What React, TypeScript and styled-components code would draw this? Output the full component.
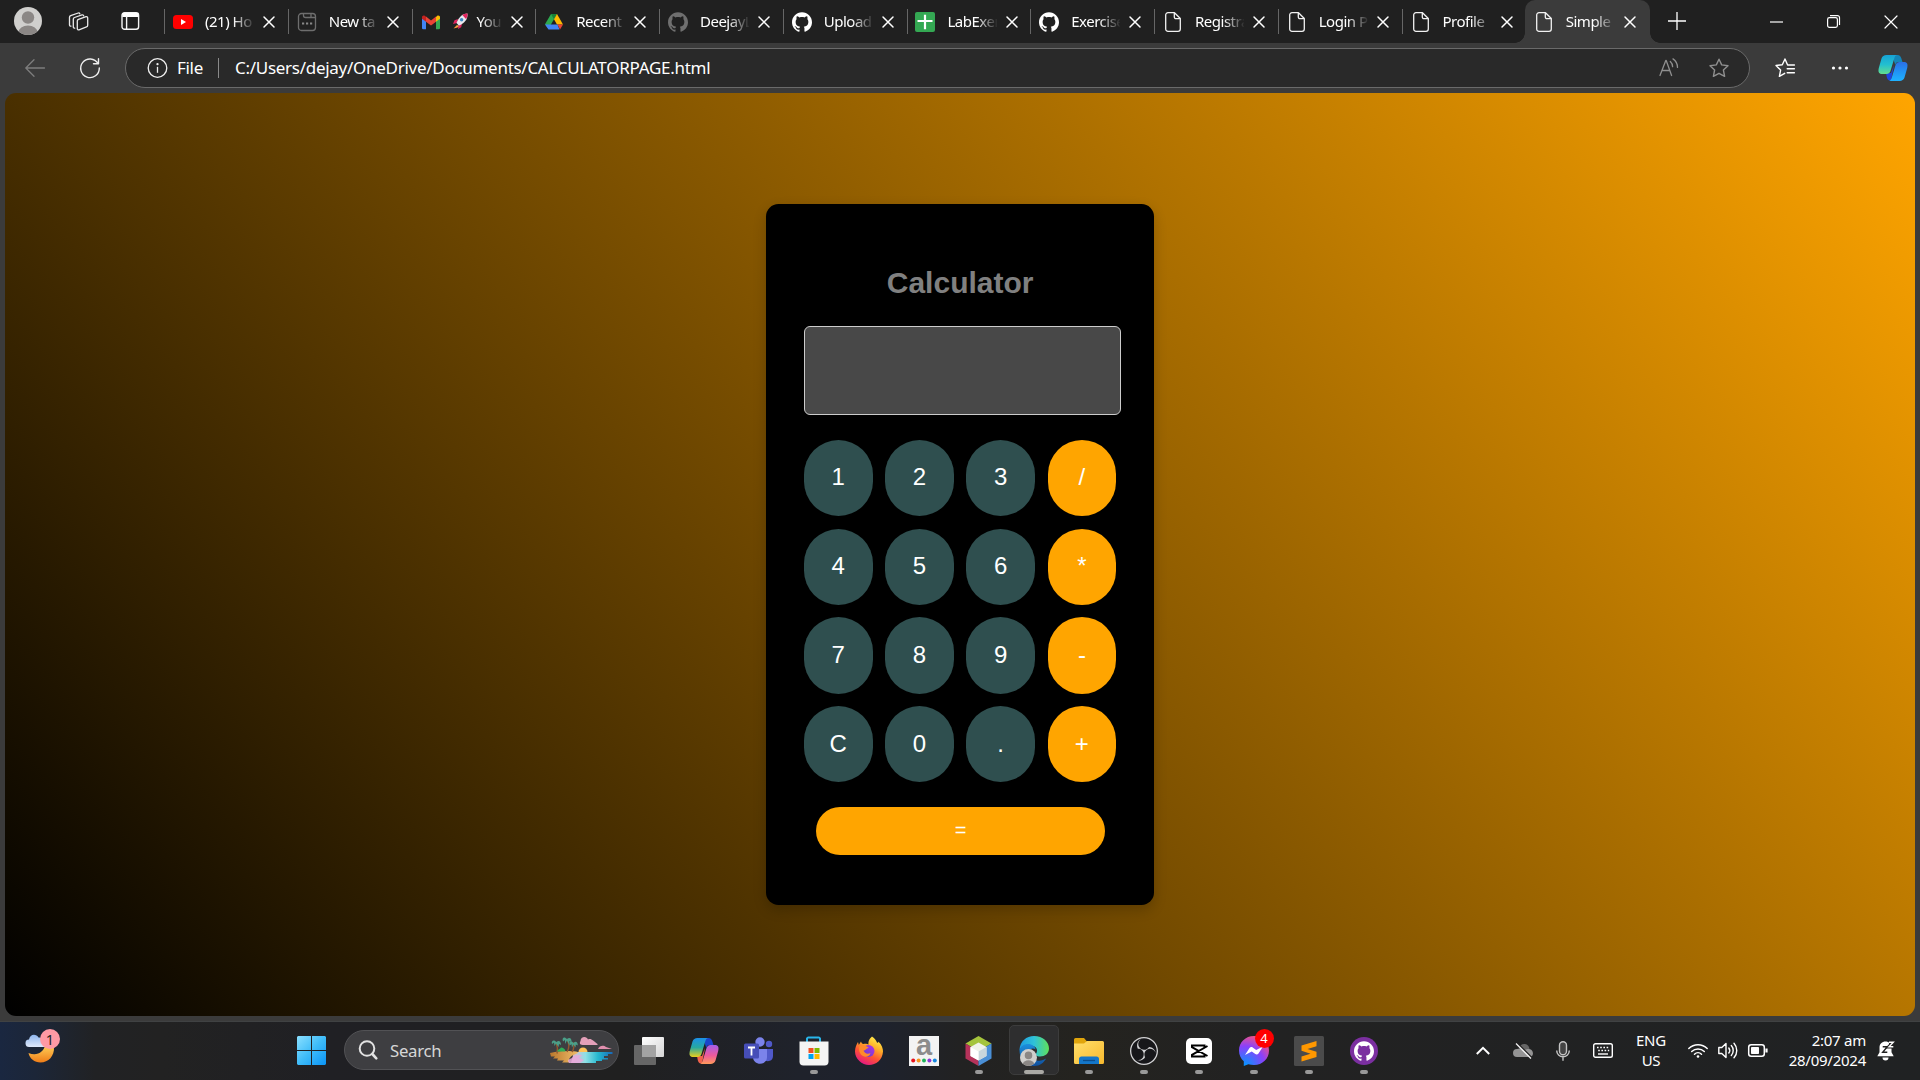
import React from "react";
import styled, { createGlobalStyle, css } from "styled-components";
import { SiGithub, SiObsstudio } from "react-icons/si";

const GlobalStyle = createGlobalStyle`
  *, *::before, *::after { box-sizing: border-box; }
  html, body { margin: 0; padding: 0; background: #202020; overflow: hidden; }
  svg { display: block; flex: none; overflow: visible; }
`;

const ui = `"Noto Sans", "Open Sans", sans-serif`;
const arial = `"Liberation Sans", Arial, sans-serif`;

const Screen = styled.div`
  width: 1920px;
  height: 1080px;
  display: flex;
  flex-direction: column;
  background: #3b3b3b;
  color: #fff;
  font-family: ${ui};
  overflow: hidden;
`;

/* ---------- tab strip ---------- */

const TabStrip = styled.header`
  height: 43px;
  display: flex;
  background: #202020;
`;

const StripTools = styled.div`
  width: 164px;
  height: 43px;
  padding: 0 0 1px 14px;
  display: flex;
  align-items: center;
`;

const ToolSlot = styled.div<{ $w: number; $gap?: number }>`
  width: ${(p) => p.$w}px;
  height: 28px;
  margin-right: ${(p) => p.$gap || 0}px;
  display: flex;
  align-items: center;
  justify-content: center;
`;

const TabItem = styled.div<{ $active?: boolean; $line: boolean }>`
  position: relative;
  width: 123.75px;
  height: 43px;
  padding-left: 9px;
  display: flex;
  align-items: center;
  ${(p) =>
    p.$line &&
    css`
      &::before {
        content: "";
        position: absolute;
        left: 0;
        top: 9px;
        width: 1px;
        height: 25px;
        background: #666;
      }
    `}
  ${(p) =>
    p.$active &&
    css`
      width: 125px;
      margin-left: -0.5px;
      background: #3b3b3b;
      border-radius: 10px 10px 0 0;
      &::before,
      &::after {
        content: "";
        position: absolute;
        bottom: 0;
        width: 10px;
        height: 10px;
      }
      &::before {
        left: -10px;
        background: radial-gradient(circle at 0 0, transparent 9.5px, #3b3b3b 10px);
      }
      &::after {
        right: -10px;
        background: radial-gradient(circle at 100% 0, transparent 9.5px, #3b3b3b 10px);
      }
    `}
`;

const TabIcon = styled.div`
  width: 20px;
  height: 20px;
  margin: 1px 12px 0 0;
  display: flex;
  align-items: center;
  justify-content: center;
`;

const TabTitle = styled.div`
  width: 49px;
  height: 24px;
  margin: 0 10px 1px 0;
  display: flex;
  align-items: center;
  gap: 9px;
  overflow: hidden;
  white-space: nowrap;
  font-size: 15px;
  letter-spacing: -0.5px;
  line-height: 24px;
  mask-image: linear-gradient(90deg, #000 28px, transparent 50px);
`;

const StripSpacer = styled.div`
  flex: 1;
`;

const NewTab = styled.div`
  width: 54px;
  height: 42px;
  display: flex;
  align-items: center;
  justify-content: center;
`;

const WindowButton = styled.div`
  width: 57.5px;
  height: 43px;
  display: flex;
  align-items: center;
  justify-content: center;
`;

/* ---------- toolbar ---------- */

const Toolbar = styled.div`
  height: 50px;
  padding: 5px 0 5px 15px;
  display: flex;
  align-items: center;
`;

const NavButton = styled.div<{ $w: number }>`
  width: ${(p) => p.$w}px;
  height: 40px;
  flex: none;
  display: flex;
  align-items: center;
  justify-content: center;
`;

const AddressBar = styled.div`
  width: 1625px;
  height: 40px;
  flex: none;
  padding: 0 20px 0 21px;
  display: flex;
  align-items: center;
  background: #292929;
  border: 1px solid #6a6a6a;
  border-radius: 20px;
`;

const Scheme = styled.span`
  width: 51px;
  padding-left: 10px;
  font-size: 17px;
  letter-spacing: -0.3px;
  line-height: 22px;
`;

const SchemeLine = styled.i`
  width: 1px;
  height: 20px;
  margin-right: 16px;
  background: #8a8a8a;
`;

const Url = styled.span`
  flex: 1;
  font-size: 17px;
  letter-spacing: -0.28px;
  line-height: 22px;
  white-space: nowrap;
`;

const BarIcons = styled.div`
  display: flex;
  gap: 30px;
`;

/* ---------- page ---------- */

const Page = styled.main`
  height: 923px;
  margin: 0 5px 5px;
  display: flex;
  align-items: center;
  justify-content: center;
  border-radius: 11px;
  background: linear-gradient(50deg, #000, #ffa500);
  font-family: ${arial};
`;

const Card = styled.section`
  width: 388px;
  height: 701px;
  padding: 62px 37.5px 0 37.75px;
  display: flex;
  flex-direction: column;
  background: #000;
  border-radius: 12.5px;
  box-shadow: 0 5px 12.5px rgba(0, 0, 0, 0.2);
`;

const Title = styled.h2`
  margin: 0;
  height: 60px;
  font-size: 30px;
  line-height: 34px;
  font-weight: 700;
  color: #808080;
  text-align: center;
`;

const Display = styled.div`
  width: 317px;
  height: 89px;
  flex: none;
  background: #484848;
  border: 1px solid #ccc;
  border-radius: 6px;
`;

const Keys = styled.div`
  margin-top: 24.75px;
  display: grid;
  grid-template-columns: repeat(4, 68.75px);
  grid-auto-rows: 76.25px;
  gap: 12.5px;
`;

const Key = styled.button<{ $op?: boolean }>`
  padding: 0 0 1px;
  border: 0;
  border-radius: 62.5px;
  background: ${(p) => (p.$op ? "#ffa500" : "#2f4f4f")};
  color: #fff;
  font-family: ${arial};
  font-size: 24px;
`;

const EqualsKey = styled(Key)`
  width: 289px;
  height: 48px;
  flex: none;
  margin: 25px 0 0 12.25px;
  border-radius: 25px;
  padding-bottom: 2px;
  font-size: 20px;
`;

/* ---------- taskbar ---------- */

const Taskbar = styled.footer`
  height: 59px;
  display: flex;
  align-items: flex-start;
  border-top: 1px solid #404243;
  background: linear-gradient(
    90deg, #1a2740 0, #1c2638 35px, #212224 95px, #222222 160px, #202024 330px,
    #202020 620px, #1f222b 800px, #1e222d 880px, #222222 960px, #24231f 1080px, #222 1250px, #202223 1920px
  );
`;

const Widgets = styled.div`
  width: 284.5px;
  height: 58px;
  padding: 10px 0 0 23px;
`;

const TaskButton = styled.div<{ $focused?: boolean }>`
  position: relative;
  width: 55px;
  height: 58px;
  padding: 0 1px 1px 0;
  display: flex;
  align-items: center;
  justify-content: center;
  ${(p) =>
    p.$focused &&
    css`
      &::before {
        content: "";
        position: absolute;
        left: 2px;
        top: 3px;
        width: 50px;
        height: 50px;
        border: 1px solid #3c3c3c;
        border-radius: 5px;
        background: #2e2e2f;
      }
    `}
  svg {
    position: relative;
  }
`;

const Running = styled.i<{ $wide?: boolean }>`
  position: absolute;
  left: ${(p) => (p.$wide ? 17 : 23)}px;
  bottom: 6px;
  width: ${(p) => (p.$wide ? 20 : 8)}px;
  height: 4px;
  border-radius: 2px;
  background: ${(p) => (p.$wide ? "#aaa9a5" : "#999")};
`;

const Badge = styled.b`
  position: absolute;
  left: 28px;
  top: 7px;
  width: 19px;
  height: 19px;
  border-radius: 50%;
  background: #f00;
  font-size: 13px;
  font-weight: 400;
  line-height: 19px;
  text-align: center;
`;

const SearchBox = styled.div`
  width: 275px;
  height: 40px;
  margin: 8px 2.5px 0 4.5px;
  padding: 0 5px 0 14px;
  display: flex;
  align-items: center;
  border: 1px solid #525255;
  border-radius: 20px;
  background: #3e3e41;
`;

const SearchText = styled.span`
  flex: 1;
  padding: 1px 0 0 11px;
  font-size: 16.8px;
  letter-spacing: -0.3px;
  line-height: 22px;
  color: #d6d6d6;
`;

const TraySpacer = styled.div`
  flex: 1;
`;

const TrayIcon = styled.div<{ $w: number }>`
  width: ${(p) => p.$w}px;
  height: 57px;
  display: flex;
  align-items: center;
  justify-content: center;
`;

const TrayText = styled.div<{ $w: number; $right?: boolean }>`
  width: ${(p) => p.$w}px;
  padding-top: 8px;
  font-size: 15px;
  letter-spacing: -0.25px;
  line-height: 20px;
  text-align: ${(p) => (p.$right ? "right" : "center")};
  white-space: nowrap;
`;

/* ---------- drawings ---------- */

const Cross = ({ size = 10, w = 1.5 }: { size?: number; w?: number }) => (
  <svg width={size} height={size} viewBox="0 0 10 10" stroke="#fff" strokeWidth={(w * 10) / size} strokeLinecap="round">
    <path d="M0 0L10 10M10 0L0 10" />
  </svg>
);

const DocIcon = () => (
  <svg width="20" height="20" fill="none" stroke="#f2f2f2" strokeWidth="1.3" strokeLinejoin="round">
    <path d="M5 .7h6.5l5.8 5.8V17a2.3 2.3 0 0 1-2.3 2.3H5A2.3 2.3 0 0 1 2.7 17V3A2.3 2.3 0 0 1 5 .7zM11.3 .9v4.2a1.6 1.6 0 0 0 1.6 1.6h4.2" />
  </svg>
);

const YouTube = () => (
  <svg width="20" height="20">
    <rect y="3" width="20" height="14" rx="3.5" fill="#f00" />
    <path d="M8 7v6l5-3z" fill="#fff" />
  </svg>
);

const NewTabPage = () => (
  <svg width="20" height="20" fill="none" stroke="#6e6e6e" strokeWidth="1.3">
    <rect x="1.5" y="1.5" width="17" height="17" rx="3" />
    <path d="M6.5 1.5v2a2 2 0 0 0 2 2h10M14 1.5v4" />
    <path d="M5 11.5h2.2M9 11.5h2.2M13 11.5h2.2" stroke="#888" strokeWidth="2" />
  </svg>
);

const Gmail = () => (
  <svg width="20" height="20">
    <path d="M1 6v10a1.3 1.3 0 0 0 1.3 1.3H5V8z" fill="#4285f4" />
    <path d="M19 6v10a1.3 1.3 0 0 1-1.3 1.3H15V8z" fill="#34a853" />
    <path d="M15 5l1-1c1.5-1 3 0 3 1.400V6.800L15 9.800z" fill="#fbbc04" />
    <path d="M5 9.800V4.600L10 8.400l5-3.800v5.200L10 13.500z" fill="#ea4335" />
    <path d="M1 6.800V5.400C1 4 2.500 3 4 4l1 .700v5.100z" fill="#c5221f" />
  </svg>
);

const Rocket = () => (
  <svg width="15" height="16" viewBox="0 0 15 16">
    <path d="M5 6L1.500 7.200 0 11l4-1zM9 10.500l-.8 3.800L5 16l.4-4z" fill="#e0245e" />
    <path d="M4 12L.5 15.500 4.500 14.500 6 13z" fill="#ff9a3c" />
    <path d="M14.500.5C10 .5 6 3.500 3.500 10l2.300 2.500C11.500 10.500 15 6 14.500.5z" fill="#e8e8ee" />
    <path d="M14.500.5c-2 0-3.700.5-5.200 1.500l3.700 4c1.100-1.600 1.700-3.500 1.500-5.500z" fill="#e0245e" />
    <circle cx="8.600" cy="6.800" r="1.700" fill="#3b88c3" />
  </svg>
);

const Drive = () => (
  <svg width="20" height="20">
    <path d="M7 2h6L4.500 16.800 1 12.200z" fill="#2da94f" />
    <path d="M7 2h6l-3 5.200z" fill="#188038" />
    <path d="M13 2l6 10.500h-6L10 7.200z" fill="#ffba00" />
    <path d="M4.500 17.500L1 12.500h12.500l2 5z" fill="#4285f4" />
    <path d="M13.500 12.500H19l-3 5z" fill="#ea4335" />
  </svg>
);

const Sheets = () => (
  <svg width="20" height="20">
    <rect x="-1" width="20" height="20" rx="2" fill="#34a853" />
    <path d="M1.500 9h15M9 2.700v14.600" stroke="#fff" strokeWidth="2.200" />
  </svg>
);

const Avatar = ({ size = 28 }: { size?: number }) => (
  <svg width={size} height={size} viewBox="0 0 28 28">
    <defs>
      <clipPath id="avatar-clip"><circle cx="14" cy="14" r="14" /></clipPath>
    </defs>
    <circle cx="14" cy="14" r="14" fill="#d0cfcd" />
    <g clipPath="url(#avatar-clip)" fill="#8b8785">
      <circle cx="14" cy="10.500" r="6.200" />
      <ellipse cx="14" cy="25.500" rx="9.500" ry="7" />
    </g>
  </svg>
);

const Workspaces = () => (
  <svg width="22" height="20" fill="none" stroke="#e8e8e8" strokeWidth="1.300" strokeLinejoin="round" strokeLinecap="round">
    <path d="M11.500 8.300l7.500-2.600a1.300 1.300 0 0 1 1.700 1.200v7.300a1.800 1.800 0 0 1-1.200 1.700L12 18.900a1.300 1.300 0 0 1-1.700-1.200v-7.700a1.800 1.800 0 0 1 1.200-1.700z" />
    <path d="M7.700 17.200a1.300 1.300 0 0 1-1.400-1.300V8.200a1.800 1.800 0 0 1 1.200-1.700L15 3.900a1.300 1.300 0 0 1 1.700.9" />
    <path d="M4 15.200a1.300 1.300 0 0 1-1.500-1.200V6.300a1.800 1.800 0 0 1 1.200-1.700L11.200 2a1.300 1.300 0 0 1 1.600.8" />
  </svg>
);

const TabActions = () => (
  <svg width="18" height="18" fill="none" stroke="#f5f5f5" strokeWidth="1.400">
    <rect x="0" y=".7" width="16.600" height="16.600" rx="2.500" />
    <path d="M.3 3h16" stroke="#fff" strokeWidth="4" />
    <path d="M4.600 4v13" />
  </svg>
);

const BackArrow = () => (
  <svg width="20" height="18" fill="none" stroke="#7d7d7d" strokeWidth="1.300" strokeLinecap="round" strokeLinejoin="round">
    <path d="M19.500 9H1M9 .7L.8 9 9 17.300" />
  </svg>
);

const Refresh = () => (
  <svg width="20" height="20" fill="none" stroke="#eee" strokeWidth="1.400" strokeLinecap="round" strokeLinejoin="round">
    <path d="M18 5.500A9.300 9.300 0 1 0 19.300 10M18.500 .8v5h-5" />
  </svg>
);

const Info = () => (
  <svg width="20" height="20" fill="none" stroke="#f0f0f0" strokeWidth="1.300">
    <circle cx="10.500" cy="10" r="9.300" />
    <path d="M10.500 8.800v6" />
    <circle cx="10.500" cy="6.200" r=".5" fill="#fff" />
  </svg>
);

const ReadAloud = () => (
  <svg width="20" height="20" fill="none" stroke="#8f8f8f" strokeWidth="1.300" strokeLinecap="round" strokeLinejoin="round">
    <path d="M1 17.500L6.800 2.500h.4L12.600 17.500M3 12.500h7.800" />
    <path d="M11.300 3.500a7 7 0 0 1 2.300 5.200M14 .9a10.500 10.500 0 0 1 4.500 8.500" />
  </svg>
);

const Star = () => (
  <svg width="20" height="20" fill="none" stroke="#8f8f8f" strokeWidth="1.400" strokeLinejoin="round">
    <path d="M10 1.200l2.700 5.700 6.300.8-4.600 4.300 1.200 6.300L10 15.300l-5.600 3 1.200-6.300L1 7.700l6.300-.8z" />
  </svg>
);

const Favorites = () => (
  <svg width="20" height="20" fill="none" stroke="#fff" strokeWidth="1.400" strokeLinejoin="round" strokeLinecap="round">
    <path d="M19.400 7h-6.800L10 1 7.300 6.700 1 7.500l4.600 4.600L4.400 18.300l5.300-3M12.200 10.800h7.200M12.200 14.800h7.200" />
  </svg>
);

const Dots = () => (
  <svg width="18" height="6" fill="#fff">
    <circle cx="2.500" cy="3" r="1.600" />
    <circle cx="9" cy="3" r="1.600" />
    <circle cx="15.500" cy="3" r="1.600" />
  </svg>
);

const Copilot = ({ color }: { color?: boolean }) => {
  const id = color ? "cop-c" : "cop-b";
  return (
    <svg width="30" height="28" viewBox="0 0 30 28">
      <defs>
        <linearGradient id={id + "l"} x1="0" y1="0" x2="0" y2="1">
          <stop offset="0" stopColor={color ? "#1b8fe8" : "#17a3d6"} />
          <stop offset=".5" stopColor={color ? "#27a9a0" : "#22bfd0"} />
          <stop offset="1" stopColor={color ? "#e8cf1c" : "#63dd8e"} />
        </linearGradient>
        <linearGradient id={id + "r"} x1="0" y1="0" x2="0" y2="1">
          <stop offset="0" stopColor={color ? "#a45ee8" : "#2b6fe6"} />
          <stop offset=".55" stopColor={color ? "#ee5a9c" : "#2196f5"} />
          <stop offset="1" stopColor={color ? "#ff9a5a" : "#1fb2ff"} />
        </linearGradient>
      </defs>
      <path d="M14 1h5.500c2.300 0 3.200 1.300 3.800 3.300L24.500 8h-4c-2 0-2.600 1-3.200 3z" fill={color ? "#1a45c9" : "#1485b8"} />
      <path d="M8 19h5l3-8-3 15.500c-2.800.5-3.600-1.200-4.200-3.200z" fill={color ? "#f0624c" : "#1e46df"} />
      <path d="M8.500 1H19c-1.700.2-2.400 2-3 4.200l-3.300 11c-.7 2.500-1.900 3.800-4.400 3.800H4.200C.5 20 0 17.500.8 14L3.500 4.500C4.200 2.200 6 1 8.500 1z" fill={`url(#${id}l)`} />
      <path d="M21.500 27H11c1.700-.2 2.400-2 3-4.200l3.300-11C18 9.300 19.200 8 21.700 8h4.100c3.700 0 4.200 2.500 3.400 6l-2.700 9.500c-.7 2.300-2.500 3.500-5 3.500z" fill={`url(#${id}r)`} />
    </svg>
  );
};

const Weather = () => (
  <svg width="40" height="36">
    <defs>
      <linearGradient id="moon" x1="0" y1="0" x2="0" y2="1">
        <stop offset="0" stopColor="#ffd25a" /><stop offset="1" stopColor="#ef7d18" />
      </linearGradient>
      <linearGradient id="cloud" x1="0" y1="0" x2="0" y2="1">
        <stop offset="0" stopColor="#8db5ee" /><stop offset="1" stopColor="#dfe9fb" />
      </linearGradient>
    </defs>
    <path d="M5.500 21c1 5.500 6 9.500 12 9.500 8 0 14-6.500 13.500-15.500l-9-2c-1 7-8 11.500-16.500 8z" fill="url(#moon)" />
    <path d="M6.500 15a3.700 3.700 0 0 1-.5-7.500C6.800 1.500 13.500 1.500 15.500 5.500 19 5 22 8 22 11.500V15z" fill="url(#cloud)" />
    <circle cx="27" cy="7" r="10" fill="#ff99a4" />
    <text x="27" y="12.500" textAnchor="middle" fontFamily="Noto Sans" fontSize="14.500" fill="#222">1</text>
  </svg>
);

const Windows = () => (
  <svg width="29" height="29">
    <defs>
      <linearGradient id="win" gradientUnits="userSpaceOnUse" x1="0" y1="0" x2="29" y2="29">
        <stop offset="0" stopColor="#8be0ff" /><stop offset=".5" stopColor="#3fbcf9" /><stop offset="1" stopColor="#0a93f5" />
      </linearGradient>
    </defs>
    <path fill="url(#win)" d="M1 0h13v14H0V1zM15 0h13l1 1v13H15zM0 15h14v14H1l-1-1zM15 15h14v13l-1 1H15z" />
  </svg>
);

const SearchGlass = () => (
  <svg width="20" height="20" fill="none" stroke="#e2e2e2" strokeLinecap="round">
    <circle cx="8" cy="8.500" r="7.300" strokeWidth="2" />
    <path d="M13.300 14l4 4.300" strokeWidth="2.600" />
  </svg>
);

const Beach = () => (
  <svg width="64" height="28">
    <defs>
      <linearGradient id="sea"><stop offset="0" stopColor="#e9b0cf" /><stop offset=".35" stopColor="#8fe0e6" /><stop offset=".65" stopColor="#25b8cf" /><stop offset="1" stopColor="#1768b8" /></linearGradient>
      <linearGradient id="sand"><stop stopColor="#b9782c" /><stop offset="1" stopColor="#f0bd6a" /></linearGradient>
    </defs>
    <circle cx="34" cy="16" r="4.500" fill="#ffc35a" />
    <path d="M25 16h38.500v2H59v2h-4v2h4v1.500h-6V25h-6v2H22z" fill="url(#sea)" />
    <path d="M1 17c7-2.500 20-2.500 26-1.500 6 1-3 3-5 5s-3 4-1 6H13l2-2H8l1-2H4l2-2H2z" fill="url(#sand)" />
    <path d="M19 25c0-2 4-2.500 5-4s5-2 9-2l-3 3 5 2-4 3H20z" fill="#e8a9dc" opacity=".85" />
    <path d="M8 17.500C9 13 8.500 10 7 6.500M18 16C21 11 20 7 18 3.500M23 16c2-3 2.500-6 1.500-9.500" stroke="#94582f" strokeWidth="1.400" fill="none" />
    <g fill="#4b9f88">
      <path d="M7.500 6C5 3 2 4.500 3 8l2-1.500L5.500 10 7 7.500 9.500 11l.5-3 2 1c0-4-2.500-5-4.500-3z" />
      <path d="M18 3C15.500 0 12.500 1.500 14 5.500l2-1.500v4l2-3.500 2 4 .5-3.500 2 1.500C23 1.500 20 1 18 3z" />
      <path d="M24.500 7c-2.500-3-5-1-4 2.500l2-1.200.5 3.200 1.500-3 2 3 .3-3 2 1c0-4-2.300-4.500-4.300-2.500z" />
    </g>
    <path d="M8 15.500c1-2.500 3-2 4-4 2 0 4 1 4.500 4z" fill="#2fae58" />
    <path d="M31.500 5c0-5 6.500-5 7.500-1.500 3.500-1.500 5 1.500 9.500 4.500v1H35c-4 0-5-1.500-3.500-4z" fill="#e3a0b9" />
    <path d="M49 13c1.500-4 6-4 8-2l6 2z" fill="#e08fae" />
  </svg>
);

const TaskView = () => (
  <svg width="30" height="28">
    <defs><linearGradient id="tv" x2="1" y2="1"><stop stopColor="#fff" /><stop offset="1" stopColor="#d5d5d5" /></linearGradient></defs>
    <rect x="8" width="22" height="20" rx="1" fill="url(#tv)" />
    <rect y="8" width="22" height="20" rx="1" fill="#666" />
    <path d="M8 8h14v12H8z" fill="#a3a3a3" />
  </svg>
);

const Teams = () => (
  <svg width="30" height="28">
    <circle cx="25" cy="7" r="3.200" fill="#5059c9" />
    <path d="M19 12h10v7c0 6-8 7-10 2z" fill="#5059c9" />
    <circle cx="16" cy="5" r="4.700" fill="#7b83eb" />
    <path d="M9 12h14v8c0 9-14 9-14 0z" fill="#7b83eb" />
    <rect y="6.500" width="15" height="15" rx="1.500" fill="#464eb8" />
    <path d="M4 10.500h7M7.500 10.500v8" stroke="#fff" strokeWidth="1.800" />
  </svg>
);

const Store = () => (
  <svg width="30" height="30">
    <path d="M8 6V2.500A1.500 1.500 0 0 1 9.500 1.500h10A1.500 1.500 0 0 1 21 2.500V6" fill="none" stroke="#29b5ea" strokeWidth="2" />
    <path d="M.5 5.500h29v20a4 4 0 0 1-4 4h-21a4 4 0 0 1-4-4z" fill="#f4f4f4" />
    <path d="M9.500 12h5v5h-5z" fill="#f25022" /><path d="M15.500 12h5v5h-5z" fill="#7fba00" />
    <path d="M9.500 18h5v5h-5z" fill="#00a4ef" /><path d="M15.500 18h5v5h-5z" fill="#ffb900" />
  </svg>
);

const Firefox = () => (
  <svg width="30" height="30">
    <defs>
      <linearGradient id="ff" x1=".8" y1="0" x2=".3" y2="1">
        <stop offset="0" stopColor="#fff44f" /><stop offset=".35" stopColor="#ffb028" /><stop offset=".65" stopColor="#ff5433" /><stop offset="1" stopColor="#e31587" />
      </linearGradient>
      <linearGradient id="ffg" x1="1" y1="0" x2="0" y2="1"><stop stopColor="#b833e1" /><stop offset="1" stopColor="#5a3fd0" /></linearGradient>
    </defs>
    <path d="M18 .5c3 2 4 4 5 6 1 .5 1.500 0 1.300-1C28 9 29 12.500 29 15.500 28.500 24 22 29 15 29S1 23 1 15.500c0-4 1.500-7 3-9.500l.8 3L7 5.500c.5 1.500 1 2.200 2.500 2.500 2-.5 4 0 5 .5C14 5 16 2 18 .5z" fill="url(#ff)" />
    <circle cx="14.500" cy="15" r="6" fill="url(#ffg)" />
    <path d="M5.500 10c3-1.500 6-1 9.500 2-3 0-3 2.500-5.500 2.500 1 3 4 4 7 2.500-1 5-8 5-10.500 0-1-2-1.300-4-.5-7z" fill="#ff8a2b" />
  </svg>
);

const AmazonTile = () => (
  <svg width="30" height="30">
    <rect width="30" height="30" fill="#f3f3f3" />
    <text x="15" y="19.300" textAnchor="middle" fontFamily="Liberation Sans" fontWeight="700" fontSize="29" fill="#8c8c8c">a</text>
    <circle cx="4.200" cy="24.500" r="2" fill="#e8141c" /><circle cx="9.600" cy="24.500" r="2" fill="#f7941d" />
    <circle cx="15" cy="24.500" r="2" fill="#1fb35b" /><circle cx="20.400" cy="24.500" r="2" fill="#8a35d6" />
    <circle cx="25.800" cy="24.500" r="2" fill="#1588e0" />
  </svg>
);

const NetBeans = () => (
  <svg width="27" height="30">
    <path d="M13.500 0L26.500 7.500 13.500 15 .5 7.500z" fill="#a5c43c" />
    <path d="M.5 7.500l13 7.500v15L.5 22.500z" fill="#b5325a" />
    <path d="M26.500 7.500l-13 7.500v15l13-7.500z" fill="#4a8fd6" />
    <path d="M13.500 6.500l8 4.500v9l-8 4.500-8-4.500v-9z" fill="#f0f2ea" />
    <path d="M13.500 15.500l8-4.500v9l-8 4.500z" fill="#c9d6dc" />
    <path d="M13.500 15.500l-8-4.500v9l8 4.500z" fill="#fff" />
  </svg>
);

const Edge = () => (
  <svg width="30" height="30">
    <defs>
      <linearGradient id="e1"><stop offset="0" stopColor="#1e9be2" /><stop offset=".5" stopColor="#2fc2d8" /><stop offset="1" stopColor="#5fe05a" /></linearGradient>
      <linearGradient id="e2" x2="0" y2="1"><stop stopColor="#1c8fdd" /><stop offset="1" stopColor="#0f4f9e" /></linearGradient>
    </defs>
    <path d="M.5 14C1 5 7.500 0 15 0c9 0 15 6 15 12.500 0 5-4 8-9 8-3.500 0-4.500-1.500-4-2.800 2-2.500 1.500-7-4-8C8 9 2 11 .5 14z" fill="url(#e1)" />
    <path d="M.5 14C2 9 7.500 7 12 8.500c3 1 4.500 3 4.500 5-1.500-1.500-4-1.500-5 0-2.500 3.500 0 9.500 6 11 4 1 7.500-.5 9.500-2-2 4-6 7.500-12 7.500C6 30 .5 23 .5 14z" fill="url(#e2)" />
    <g transform="translate(1 13)"><Avatar size={17} /></g>
  </svg>
);

const Explorer = () => (
  <svg width="30" height="27">
    <defs><linearGradient id="fold" x2="1" y2="1"><stop stopColor="#ffdf6b" /><stop offset="1" stopColor="#f7b92e" /></linearGradient></defs>
    <path d="M0 2.500A1.500 1.500 0 0 1 1.500 1H10L13 4.500H28.500v8H0z" fill="#e0a50c" />
    <path d="M0 6.500h10l3-2.500h15.500A1.500 1.500 0 0 1 30 5.500v20a1.500 1.500 0 0 1-1.500 1.500h-27A1.500 1.500 0 0 1 0 25.500z" fill="url(#fold)" />
    <path d="M5 27v-5.500A2.500 2.500 0 0 1 7.500 19.500h15a2.500 2.500 0 0 1 2.500 2.500V27z" fill="#1477c9" />
    <path d="M9 23.500h12" stroke="#0b4d8c" strokeWidth="1.300" />
  </svg>
);

const Obs = () => (
  <svg width="28" height="28">
    <circle cx="14" cy="14" r="13.300" fill="#17171a" />
    <SiObsstudio x="0" y="0" size={28} color="#d2d2d4" />
  </svg>
);

const CapCut = () => (
  <svg width="26" height="26">
    <rect width="26" height="26" rx="5" fill="#fff" />
    <path d="M21.500 8L6 16.800v1.700h12.500v-2M21.500 18L6 9.200V7.500h12.500v2" fill="none" stroke="#000" strokeWidth="2" />
  </svg>
);

const Messenger = () => (
  <svg width="30" height="30">
    <defs>
      <radialGradient id="ms" cx=".2" cy="1" r="1.100"><stop stopColor="#09f" /><stop offset=".6" stopColor="#8a40fb" /><stop offset=".93" stopColor="#e8528c" /><stop offset="1" stopColor="#ff6968" /></radialGradient>
    </defs>
    <path d="M15 0C6.500 0 0 6.200 0 14.500c0 4.400 1.800 8.200 4.800 10.800V30l4.500-1.700c1.800.5 3.700.8 5.700.8 8.500 0 15-6.200 15-14.500S23.500 0 15 0z" fill="url(#ms)" />
    <path d="M6 19l4.500-7c.7-1.100 2.200-1.400 3.200-.6l3.500 2.600 6.800-3.500-4.500 7c-.7 1.100-2.200 1.400-3.200.6L12.800 15.500z" fill="#fff" />
  </svg>
);

const Sublime = () => (
  <svg width="30" height="30">
    <rect width="30" height="30" rx="1.500" fill="#4b4b4b" />
    <path d="M22.500 5v5.200l-9 2.800 9 2.800V21L7.500 25.500v-5l9-2.800-9-2.900V9.500z" fill="#ff9800" />
  </svg>
);

const GitHubDesktop = () => (
  <svg width="28" height="28">
    <circle cx="14" cy="14" r="14" fill="#7b2fa0" />
    <SiGithub x="4" y="4" size={20} color="#fff" />
  </svg>
);

const Chevron = () => (
  <svg width="14" height="9" fill="none" stroke="#fff" strokeWidth="2"><path d="M.8 8L7 1.800 13.200 8" /></svg>
);

const CloudOff = () => (
  <svg width="20" height="16">
    <path d="M6 5C7 2 9.500 .5 12 1c2.500.3 4.500 2.500 4.500 5L13 9z" fill="#666" />
    <path d="M4 14a4 4 0 0 1 0-8c3-1.500 5.500 0 7 1.500C14 5 20 5.500 20 10.500 20 13 18 14 16.500 14z" fill="#949494" />
    <path d="M4 -.3l15 15" stroke="#222" strokeWidth="1.500" />
    <path d="M3 .5l15 15" stroke="#f0f0f0" strokeWidth="1.300" />
  </svg>
);

const Mic = () => (
  <svg width="14" height="20" fill="none" stroke="#c4c4c4" strokeWidth="1.400">
    <rect x="3.500" y=".7" width="7" height="13" rx="3.500" fill="#444" />
    <path d="M.7 9.500a6.300 6.300 0 0 0 12.600 0M7 16v3.800" />
  </svg>
);

const Keyboard = () => (
  <svg width="20" height="15" fill="none" stroke="#fff" strokeWidth="1.400">
    <rect x=".7" y=".7" width="18.600" height="13.600" rx="1.800" />
    <path d="M4 4.500h12.500M5.200 7.500h11" strokeDasharray="1.600 1.600" strokeWidth="1.600" /><path d="M5 11h10" />
  </svg>
);

const Wifi = () => (
  <svg width="20" height="15" fill="none" stroke="#fff" strokeWidth="1.500" strokeLinecap="round">
    <path d="M.8 5.500a13 13 0 0 1 18.400 0M3.700 8.500a9 9 0 0 1 12.600 0M6.500 11.200a5 5 0 0 1 7 0" />
    <circle cx="10" cy="13.500" r="1.300" fill="#fff" stroke="none" />
  </svg>
);

const Speaker = () => (
  <svg width="20" height="17" fill="none" stroke="#fff" strokeWidth="1.400" strokeLinecap="round" strokeLinejoin="round">
    <path d="M.8 5.500h3L8 1.500v14l-4.200-4h-3z" />
    <path d="M10.800 6a4 4 0 0 1 0 5M13.300 3.500a7.500 7.500 0 0 1 0 10M16 1.200a11 11 0 0 1 0 14.600" />
  </svg>
);

const Battery = () => (
  <svg width="20" height="13" fill="none" stroke="#fff" strokeWidth="1.500">
    <rect x=".7" y=".7" width="15.600" height="11.600" rx="2.500" />
    <rect x="3" y="3" width="8" height="7" rx=".8" fill="#fff" stroke="none" /><path d="M18.500 4.500v4" strokeWidth="2.200" />
  </svg>
);

const Bell = () => (
  <svg width="17" height="19" fill="none">
    <path d="M8.500 .5C5 .5 2.500 3 2.500 6.500v4.800L.3 15.200h16.400l-2.200-3.900V6.500C14.500 3 12 .5 8.500 .5z" fill="#fff" />
    <path d="M5.500 16.500h6a3 3 0 0 1-6 0z" fill="#fff" />
    <path d="M5.700 5.800h4.600l-4.600 5.400h4.600" stroke="#222" strokeWidth="1.400" />
    <path d="M12 1.200h4.300l-4.300 4.600h4.300" stroke="#222" strokeWidth="3.600" />
    <path d="M12 1.200h4.300l-4.300 4.600h4.300" stroke="#fff" strokeWidth="1.400" />
  </svg>
);

/* ---------- data ---------- */

const tabs: { icon: React.ReactNode; title: string; rocket?: boolean; active?: boolean }[] = [
  { icon: <YouTube />, title: "(21) Ho" },
  { icon: <NewTabPage />, title: "New ta" },
  { icon: <Gmail />, title: "You", rocket: true },
  { icon: <Drive />, title: "Recent" },
  { icon: <SiGithub size={20} color="#6f6f6f" />, title: "DeejayL" },
  { icon: <SiGithub size={20} color="#fff" />, title: "Upload" },
  { icon: <Sheets />, title: "LabExer" },
  { icon: <SiGithub size={20} color="#fff" />, title: "Exercise" },
  { icon: <DocIcon />, title: "Registra" },
  { icon: <DocIcon />, title: "Login P" },
  { icon: <DocIcon />, title: "Profile" },
  { icon: <DocIcon />, title: "Simple", active: true },
];

const keys = ["1", "2", "3", "/", "4", "5", "6", "*", "7", "8", "9", "-", "C", "0", ".", "+"];

const apps: { icon: React.ReactNode; running?: boolean; focused?: boolean; badge?: string }[] = [
  { icon: <TaskView /> },
  { icon: <Copilot color /> },
  { icon: <Teams /> },
  { icon: <Store />, running: true },
  { icon: <Firefox /> },
  { icon: <AmazonTile /> },
  { icon: <NetBeans />, running: true },
  { icon: <Edge />, running: true, focused: true },
  { icon: <Explorer />, running: true },
  { icon: <Obs />, running: true },
  { icon: <CapCut />, running: true },
  { icon: <Messenger />, running: true, badge: "4" },
  { icon: <Sublime />, running: true },
  { icon: <GitHubDesktop />, running: true },
];

export default function App() {
  return (
    <Screen>
      <GlobalStyle />
      <TabStrip>
        <StripTools>
          <ToolSlot $w={28} $gap={24}><Avatar /></ToolSlot>
          <ToolSlot $w={24} $gap={32}><Workspaces /></ToolSlot>
          <ToolSlot $w={18}><TabActions /></ToolSlot>
        </StripTools>
        {tabs.map((t, i) => (
          <TabItem key={i} $active={t.active} $line={!t.active}>
            <TabIcon>{t.icon}</TabIcon>
            <TabTitle>
              {t.rocket && <Rocket />}
              {t.title}
            </TabTitle>
            <Cross />
          </TabItem>
        ))}
        <NewTab>
          <svg width="18" height="18" stroke="#fff" strokeWidth="1.300"><path d="M0 9h18M9 0v18" /></svg>
        </NewTab>
        <StripSpacer />
        <WindowButton><svg width="13" height="2"><path d="M0 1h13" stroke="#fff" strokeWidth="1.200" /></svg></WindowButton>
        <WindowButton>
          <svg width="13" height="13" fill="none" stroke="#fff" strokeWidth="1.200">
            <rect x=".6" y="2.600" width="9.800" height="9.800" rx="1.800" /><path d="M3 .6h7.500a2 2 0 0 1 2 2V10" />
          </svg>
        </WindowButton>
        <WindowButton><Cross size={12} w={1.2} /></WindowButton>
      </TabStrip>

      <Toolbar>
        <NavButton $w={40}><BackArrow /></NavButton>
        <NavButton $w={70}><Refresh /></NavButton>
        <AddressBar>
          <Info />
          <Scheme>File</Scheme>
          <SchemeLine />
          <Url>C:/Users/dejay/OneDrive/Documents/CALCULATORPAGE.html</Url>
          <BarIcons><ReadAloud /><Star /></BarIcons>
        </AddressBar>
        <NavButton $w={70}><Favorites /></NavButton>
        <NavButton $w={40}><Dots /></NavButton>
        <NavButton $w={66}><Copilot /></NavButton>
      </Toolbar>

      <Page>
        <Card>
          <Title>Calculator</Title>
          <Display />
          <Keys>
            {keys.map((k) => <Key key={k} $op={"/*-+".includes(k)}>{k}</Key>)}
          </Keys>
          <EqualsKey $op>=</EqualsKey>
        </Card>
      </Page>

      <Taskbar>
        <Widgets><Weather /></Widgets>
        <TaskButton><Windows /></TaskButton>
        <SearchBox>
          <SearchGlass />
          <SearchText>Search</SearchText>
          <Beach />
        </SearchBox>
        {apps.map((a, i) => (
          <TaskButton key={i} $focused={a.focused}>
            {a.icon}
            {a.badge && <Badge>{a.badge}</Badge>}
            {a.running && <Running $wide={a.focused} />}
          </TaskButton>
        ))}
        <TraySpacer />
        <TrayIcon $w={40}><Chevron /></TrayIcon>
        <TrayIcon $w={40}><CloudOff /></TrayIcon>
        <TrayIcon $w={40}><Mic /></TrayIcon>
        <TrayIcon $w={40}><Keyboard /></TrayIcon>
        <TrayText $w={56}>ENG<br />US</TrayText>
        <TrayIcon $w={38}><Wifi /></TrayIcon>
        <TrayIcon $w={22}><Speaker /></TrayIcon>
        <TrayIcon $w={38}><Battery /></TrayIcon>
        <TrayText $w={89} $right>2:07 am<br />28/09/2024</TrayText>
        <TrayIcon $w={39}><Bell /></TrayIcon>
        <TrayIcon $w={15} />
      </Taskbar>
    </Screen>
  );
}
